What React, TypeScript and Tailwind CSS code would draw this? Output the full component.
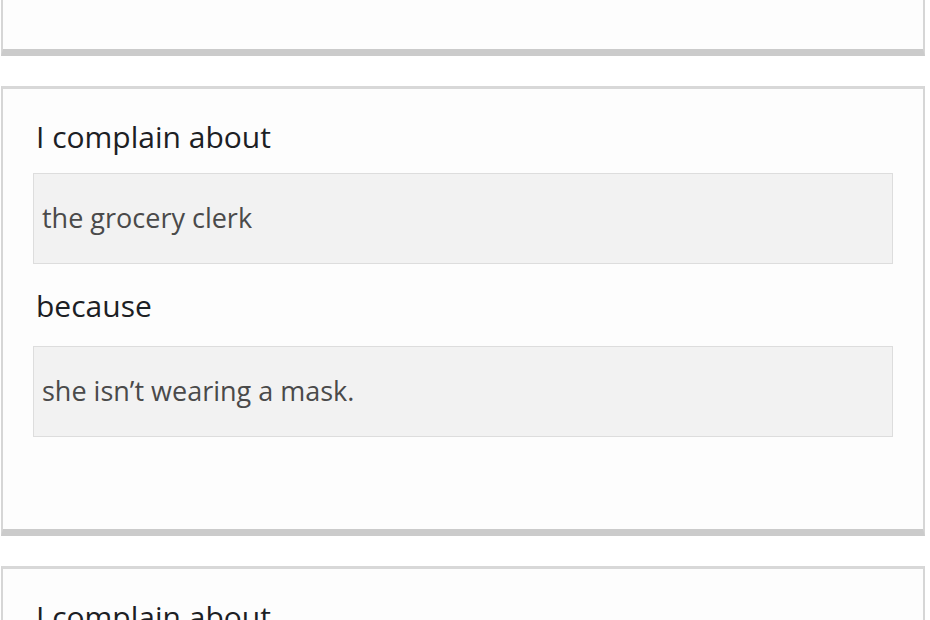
import React from "react";

type Complaint = {
  who: string;
  why: string;
};

const complaints: Complaint[] = [
  { who: "the grocery clerk", why: "she isn\u2019t wearing a mask." },
  { who: "the bus driver", why: "he never waits for me." },
];

const Field = ({ value }: { value: string }) => (
  <div className="h-[91px] flex items-center border border-[#dddddd] bg-[#f2f2f2] px-[8px] text-[27px] text-[#4a4a4a]">
    {value}
  </div>
);

const Card = ({ c }: { c: Complaint }) => (
  <div className="mt-[30px] bg-[#fdfdfd] border-x-2 border-t-[3px] border-b-[7px] border-x-[#d6d6d6] border-t-[#d8d8d8] border-b-[#cbcbcb] px-[30px] pt-[30px] pb-[92px]">
    <p className="pl-[3px] text-[30px] leading-[36px] text-[#1c2024]">I complain about</p>
    <div className="mt-[18px]">
      <Field value={c.who} />
    </div>
    <p className="pl-[3px] mt-[24px] text-[30px] leading-[36px] text-[#1c2024]">because</p>
    <div className="mt-[22px]">
      <Field value={c.why} />
    </div>
  </div>
);

const App = () => {
  return (
    <div
      className="h-[620px] overflow-hidden bg-white pl-[1px] pr-[5px]"
      style={{ fontFamily: '"Open Sans", "Liberation Sans", sans-serif' }}
    >
      {/* previous card, scrolled mostly out of view */}
      <div className="h-[56px] bg-[#fdfdfd] border-x-2 border-b-[7px] border-x-[#d6d6d6] border-b-[#cbcbcb]" />
      {complaints.map((c, i) => (
        <Card key={i} c={c} />
      ))}
    </div>
  );
};

export default App;
